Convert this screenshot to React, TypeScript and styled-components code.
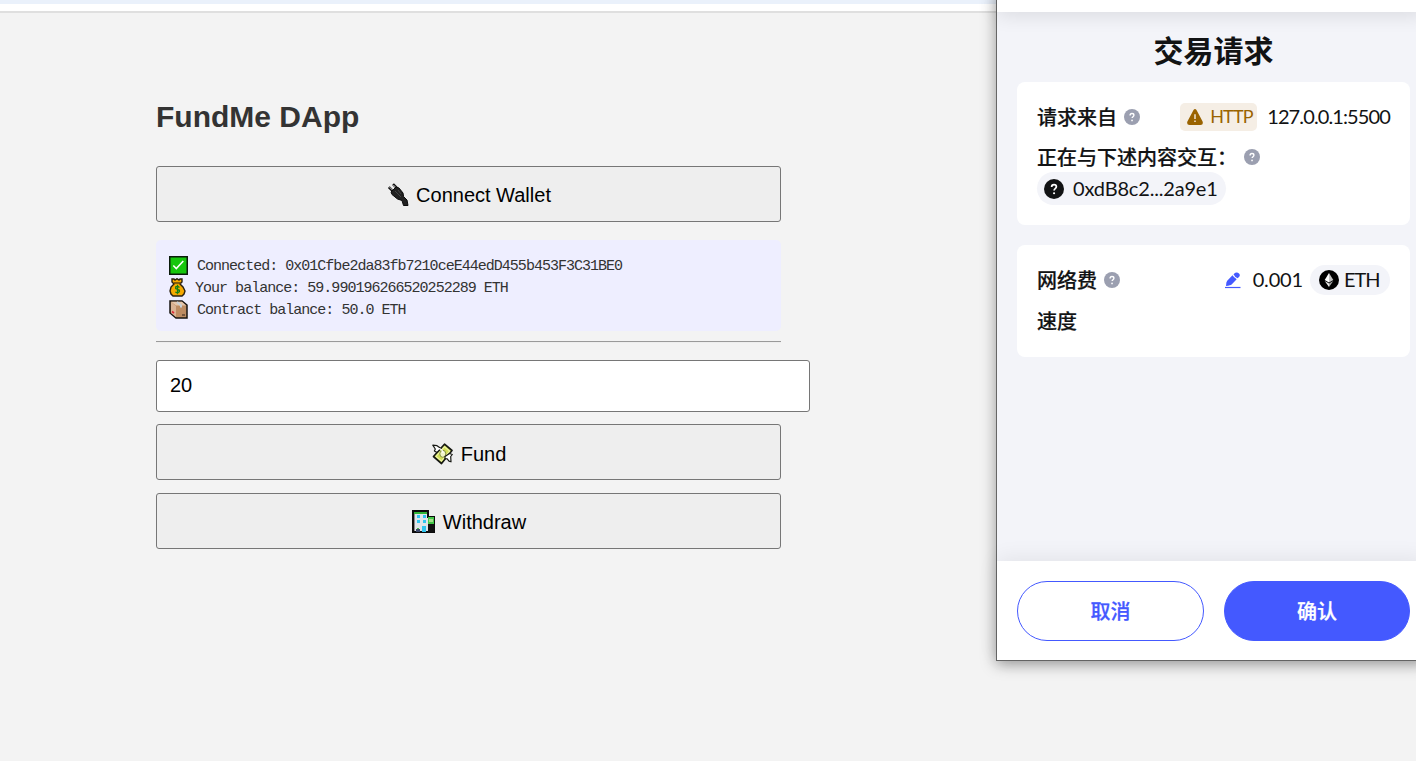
import React from 'react';
import styled, { createGlobalStyle } from 'styled-components';

const GlobalStyle = createGlobalStyle`
  * { box-sizing: border-box; }
  body { margin: 0; background: #f3f3f3; font-family: "Liberation Sans", Arial, sans-serif; overflow: hidden; }
  button { font-family: inherit; }
`;

const Screen = styled.div`
  position: relative;
  width: 1416px;
  height: 761px;
  overflow: hidden;
  background: #f3f3f3;
`;

const BrowserBar = styled.div`
  height: 13px;
  background: #fff;
  border-top: 4px solid #eaf1fb;
  border-bottom: 2px solid #dfdfdf;
`;

const Page = styled.main`
  width: 625px;
  margin: 84px 0 0 156px;
`;

const Title = styled.h1`
  margin: 0 0 29px;
  font-size: 30px;
  line-height: 40px;
  font-weight: bold;
  color: #333;
`;

const ActionButton = styled.button<{ $gap?: number; $drop?: number }>`
  display: flex;
  align-items: center;
  justify-content: center;
  gap: 7px;
  width: 100%;
  height: 56px;
  margin: 0 0 ${(p) => p.$gap ?? 13}px;
  padding: ${(p) => p.$drop ?? 2}px 0 0 1px;
  border: 1px solid #767676;
  border-radius: 3px;
  background: #eeeeee;
  color: #000;
  font-size: 20px;
`;

const Log = styled.div`
  display: flex;
  flex-direction: column;
  height: 91px;
  padding: 14px 13px 0;
  border-radius: 5px;
  background: #eeeeff;
  color: #333;
`;

const LogLine = styled.div`
  display: flex;
  flex: none;
  align-items: center;
  height: 22px;
  gap: 9px;
  white-space: pre;
  font-family: "Liberation Mono", monospace;
  font-size: 15px;
  letter-spacing: -0.98px;
`;

const LogText = styled.span`
  padding-top: 3px;
`;

const Divider = styled.hr`
  margin: 10px 0 17px;
  border: 0;
  height: 2px;
  border-top: 1px solid #9a9a9a;
  border-bottom: 1px solid #eee;
`;

const AmountInput = styled.input`
  display: block;
  width: 654px;
  height: 52px;
  margin-bottom: 12px;
  padding: 0 13px 2px;
  border: 1px solid #767676;
  border-radius: 3px;
  background: #fff;
  color: #000;
  font: 20px "Liberation Sans", Arial, sans-serif;
  outline: none;
`;

const WalletWindow = styled.aside`
  position: absolute;
  top: -10px;
  left: 996px;
  width: 430px;
  height: 671px;
  display: flex;
  flex-direction: column;
  border: 1px solid #666;
  background: #f3f4f9;
  color: #121314;
  box-shadow: 0 3px 14px rgba(0, 0, 0, 0.38);
  font-family: Lato, "Noto Sans CJK SC", sans-serif;
`;

const WalletHeader = styled.header`
  height: 21px;
  background: #fff;
  box-shadow: 0 3px 20px rgba(0, 0, 0, 0.11);
`;

const WalletBody = styled.div`
  flex: 1;
  width: 433px;
  padding: 16px 20px 0;
`;

const WalletTitle = styled.h2`
  margin: 0 0 11px;
  width: 393px;
  text-align: center;
  font: bold 30px/43px "Noto Sans CJK SC", sans-serif;
`;

const Card = styled.section<{ $height: number }>`
  width: 393px;
  height: ${(p) => p.$height}px;
  margin-bottom: 20px;
  padding: 20px 20px 0;
  border-radius: 8px;
  background: #fff;
`;

const Row = styled.div<{ $height: number; $top?: number }>`
  display: flex;
  align-items: center;
  height: ${(p) => p.$height}px;
  margin-top: ${(p) => p.$top ?? 0}px;
`;

const Label = styled.span`
  margin-right: 7px;
  white-space: nowrap;
  font: 500 20px/30px "Noto Sans CJK SC", sans-serif;
  -webkit-text-stroke: 0.2px currentColor;
`;

const Spacer = styled.span`
  flex: 1;
`;

const HttpTag = styled.span`
  display: flex;
  align-items: center;
  gap: 7px;
  width: 77px;
  height: 28px;
  margin-right: 10px;
  padding-left: 7px;
  border-radius: 5px;
  background: #f5eee5;
  color: #9a6300;
`;

const Value = styled.span<{ $size?: number; $tracking?: number }>`
  margin-top: -2px;
  white-space: nowrap;
  font-size: ${(p) => p.$size ?? 20}px;
  line-height: 28px;
  letter-spacing: ${(p) => p.$tracking ?? 0}px;
`;

const Pill = styled.span<{ $width: number; $height: number; $gap: number; $pad: number }>`
  display: flex;
  align-items: center;
  width: ${(p) => p.$width}px;
  height: ${(p) => p.$height}px;
  gap: ${(p) => p.$gap}px;
  padding-left: ${(p) => p.$pad}px;
  border-radius: 17px;
  background: #f3f4f9;
`;

const TokenPill = styled(Pill)`
  margin-left: 7px;
`;

const EditIcon = styled.svg`
  margin-right: 12px;
`;

const WalletFooter = styled.footer`
  display: flex;
  gap: 20px;
  height: 99px;
  padding: 20px;
  background: #fff;
  box-shadow: 0 -3px 20px rgba(0, 0, 0, 0.07);
`;

const FooterButton = styled.button<{ $primary?: boolean }>`
  flex: none;
  width: ${(p) => (p.$primary ? 186 : 187)}px;
  height: 60px;
  padding: 0;
  border: 1px solid #4459ff;
  border-radius: 30px;
  background: ${(p) => (p.$primary ? '#4459ff' : '#fff')};
  color: ${(p) => (p.$primary ? '#fff' : '#4459ff')};
  font: 500 20px/30px "Noto Sans CJK SC", sans-serif;
  -webkit-text-stroke: 0.25px currentColor;
`;

const PlugIcon = () => (
  <svg width="22" height="24" viewBox="0 0 22 24">
    <path d="m1.8 4.2 4 4M6 1.2l4 4" stroke="#111" strokeWidth="2.6" fill="none" />
    <path d="m2.6 4.2 3 3M6.3 2l3 3" stroke="#c4c4c4" strokeWidth="1" />
    <path d="m4 9 5-5 3 1 4 5 .6 3.6 3.4 3.4 1 5.5h-4.5l-1.5-5-4.5-1.5-5.5-4.500z" fill="#222" stroke="#0a0a0a" />
    <path d="m8 8 6 6M11 7l3 4" stroke="#444" />
  </svg>
);

const CheckIcon = () => (
  <svg width="19" height="19" viewBox="0 0 19 19">
    <rect x=".75" y=".75" width="17.5" height="17.5" fill="#16c60c" stroke="#0b1b0b" strokeWidth="1.5" />
    <path d="m4.3 9.5 3 3L14.3 5" fill="none" stroke="#fff" strokeWidth="1.6" />
  </svg>
);

const MoneyBagIcon = () => (
  <svg width="17" height="19" viewBox="0 0 17 19">
    <path d="M3 1h2l1 1 2-1.3L10 2l1-1h2v3l-2 2 3 3 2 4-1 3-2 2H4l-2-2-1-3 1-4 3-3-2-2z" fill="#f6a900" stroke="#2b2110" strokeWidth="1.4" />
    <path d="M5 5h7" stroke="#5d4310" strokeWidth="1.5" />
    <path d="M10.5 9.5 8.5 8 6.7 9v1.5l3.7 1.7v1.5L8.5 15l-2.2-1M8.5 6.8v9.4" fill="none" stroke="#168014" strokeWidth="1.3" />
  </svg>
);

const PackageIcon = () => (
  <svg width="19" height="19" viewBox="0 0 19 19">
    <path d="M1 1h12l5 4v13H7l-6-5z" fill="#bd8c62" stroke="#171412" strokeWidth="1.5" />
    <path d="m2 2 5 4v11l-5-4z" fill="#d9b394" />
    <path d="M2 1.8h11l4 3.7H7z" fill="#e5c6aa" />
    <path d="m8 2 4 3.5v2" fill="none" stroke="#c8d0d5" strokeWidth="2" />
    <path d="M3 11.5 5 13" stroke="#e12838" strokeWidth="1.6" />
    <path d="M13 15h3" stroke="#614632" strokeWidth="1.5" />
  </svg>
);

const FlyingMoneyIcon = () => (
  <svg width="22" height="22" viewBox="0 0 22 22">
    <path d="M12.5 1.2 20 7.5 9.5 20.5 1.5 13.5z" fill="#d3df55" stroke="#161812" strokeWidth="1.7" strokeLinejoin="round" />
    <path d="M12.4 3.8 17.6 8 9.4 18 4 13.4z" fill="none" stroke="#edf3a8" strokeWidth="1.1" />
    <ellipse cx="10.8" cy="10.8" rx="3" ry="3.5" fill="#f1f4c8" stroke="#84923e" />
    <path d="M.8 2.2 5 2.7 9 5.5 5 9.5 2.4 8 3.3 6z" fill="#fff" stroke="#161812" strokeWidth="1.2" strokeLinejoin="round" />
    <path d="m13 13.5 4.5-3 2.8 1-1.6 2 .3 5.3-2-.7-1.8-2.3-2.2-.3z" fill="#fff" stroke="#161812" strokeWidth="1.2" strokeLinejoin="round" />
    <path d="M7 5.5q4 1.2 4 4.500" fill="none" stroke="#fff" strokeWidth="1.3" />
  </svg>
);

const BankIcon = () => (
  <svg width="24" height="24" viewBox="0 0 24 24" shapeRendering="crispEdges">
    <path d="M1 1h15v6h6v15H1z" fill="#dfe5e9" stroke="#0b0b0b" strokeWidth="2" />
    <path d="M2 2h13v2H2z" fill="#30b436" />
    <path d="M2 4h1v17H2z" fill="#888" />
    <path d="M16 7h6v15h-6z" fill="#111" />
    <path d="M16 7h6v7h-6z" fill="#42c647" />
    <path d="M17 9h4v3h-4z" fill="#a5df8c" />
    <path d="M5 5h3v3H5zM11 5h3v3h-3zM5 10h3v3H5zM11 10h3v3h-3zM10 16h4v6h-4z" fill="#2fc5ef" />
    <path d="M4 19h4v3H4z" fill="#3b4768" />
    <path d="M5 18h2v1H5z" fill="#43b449" />
  </svg>
);

const HelpIcon = ({ size = 16, color = '#9b9fb0' }: { size?: number; color?: string }) => (
  <svg width={size} height={size} viewBox="0 0 16 16">
    <circle cx="8" cy="8" r="8" fill={color} />
    <path d="M6.1 6.4c0-1.2.8-1.9 1.9-1.9s1.9.7 1.9 1.7c0 1.5-1.8 1.5-1.8 2.9" fill="none" stroke="#fff" strokeWidth="1.4" />
    <circle cx="8.05" cy="11.4" r=".85" fill="#fff" />
  </svg>
);

const WarningIcon = () => (
  <svg width="16" height="16" viewBox="0 0 16 16">
    <path d="M6.5.9Q8-.8 9.5.9L15.6 12.5Q16.6 15.7 13.5 16h-11Q-.6 15.7.4 12.5z" fill="#9a6300" />
    <path d="M8 5.2v4.9M8 11.4v1.7" stroke="#f5eee5" strokeWidth="1.4" />
  </svg>
);

const PencilIcon = () => (
  <EditIcon width="16" height="17" viewBox="0 0 16 17">
    <path d="M7.5 3.2Q9 5.6 11.7 7.2L6.6 12.5Q5.8 13.3 1 14 1.2 9.8 2.2 8.7z" fill="#4459ff" />
    <path d="M8.5 2.3q1.2 2.8 4.2 4L14.2 4.8q1.3-1.8-.2-3.4-1.8-1.6-3.7-.6z" fill="#4459ff" />
    <path d="M0 15.500h15.5" stroke="#4459ff" strokeWidth="1.2" />
  </EditIcon>
);

const EthIcon = () => (
  <svg width="20" height="20" viewBox="0 0 20 20">
    <circle cx="10" cy="10" r="10" fill="#000" />
    <path d="m10 3-4.3 7 4.3 2.6z" fill="#fff" />
    <path d="m10 3 4.3 7-4.3 2.6z" fill="#c4c4c4" />
    <path d="m5.7 11 4.3 6v-3.5z" fill="#eee" />
    <path d="m14.3 11-4.3 6v-3.5z" fill="#aaa" />
  </svg>
);

export default function App() {
  return (
    <Screen>
      <GlobalStyle />
      <BrowserBar />
      <Page>
        <Title>FundMe DApp</Title>
        <ActionButton $gap={18}><PlugIcon />Connect Wallet</ActionButton>
        <Log>
          <LogLine><CheckIcon /><LogText>Connected: 0x01Cfbe2da83fb7210ceE44edD455b453F3C31BE0</LogText></LogLine>
          <LogLine><MoneyBagIcon /><LogText>Your balance: 59.990196266520252289 ETH</LogText></LogLine>
          <LogLine><PackageIcon /><LogText>Contract balance: 50.0 ETH</LogText></LogLine>
        </Log>
        <Divider />
        <AmountInput defaultValue="20" />
        <ActionButton $drop={4}><FlyingMoneyIcon />Fund</ActionButton>
        <ActionButton><BankIcon />Withdraw</ActionButton>
      </Page>

      <WalletWindow>
        <WalletHeader />
        <WalletBody>
          <WalletTitle>交易请求</WalletTitle>
          <Card $height={143}>
            <Row $height={30}>
              <Label>请求来自</Label>
              <HelpIcon />
              <Spacer />
              <HttpTag><WarningIcon /><Value $size={18} $tracking={-0.8}>HTTP</Value></HttpTag>
              <Value $tracking={-0.88}>127.0.0.1:5500</Value>
            </Row>
            <Row $height={30} $top={10}>
              <Label>正在与下述内容交互：</Label>
              <HelpIcon />
            </Row>
            <Pill $width={189} $height={33} $gap={9} $pad={7}>
              <HelpIcon size={20} color="#121314" />
              <Value $tracking={-0.18}>0xdB8c2...2a9e1</Value>
            </Pill>
          </Card>
          <Card $height={112}>
            <Row $height={30}>
              <Label>网络费</Label>
              <HelpIcon />
              <Spacer />
              <PencilIcon />
              <Value $tracking={-0.15}>0.001</Value>
              <TokenPill $width={80} $height={30} $gap={5} $pad={9}>
                <EthIcon />
                <Value $tracking={-1}>ETH</Value>
              </TokenPill>
            </Row>
            <Row $height={52}>
              <Label>速度</Label>
            </Row>
          </Card>
        </WalletBody>
        <WalletFooter>
          <FooterButton>取消</FooterButton>
          <FooterButton $primary>确认</FooterButton>
        </WalletFooter>
      </WalletWindow>
    </Screen>
  );
}
